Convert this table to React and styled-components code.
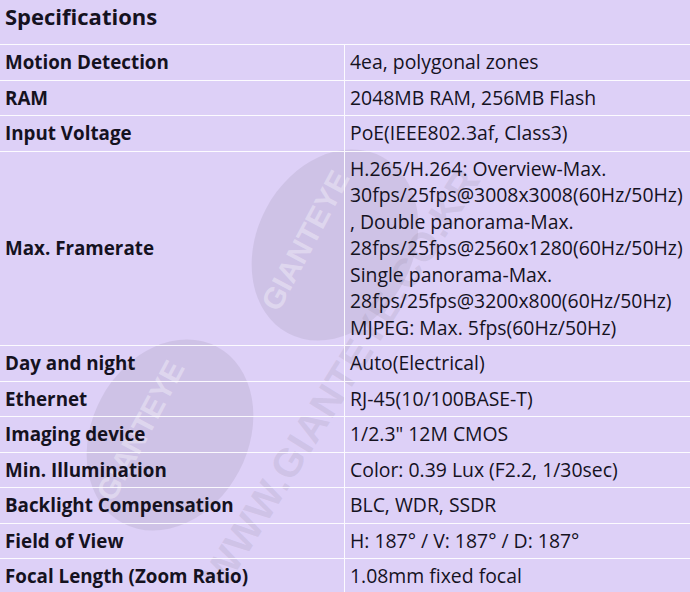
import React from "react";
import styled, { createGlobalStyle } from "styled-components";

const GlobalStyle = createGlobalStyle`
  html, body {
    margin: 0;
    padding: 0;
    background: #ddd0f7;
  }
  body {
    font-family: "Open Sans", "Noto Sans", "Liberation Sans", sans-serif;
    color: #15121f;
  }
`;

const Sheet = styled.div`
  position: relative;
  width: 690px;
  height: 592px;
  overflow: hidden;
  background: #ddd0f7;
`;

const Title = styled.h2`
  position: relative;
  z-index: 1;
  margin: 0;
  height: 44px;
  padding: 0 5px;
  box-sizing: border-box;
  font-size: 22px;
  line-height: 32px;
  font-weight: 700;
`;

const Table = styled.div`
  position: relative;
  z-index: 1;
  display: grid;
  grid-template-columns: 345px 1fr;
`;

const Cell = styled.div`
  display: flex;
  align-items: center;
  padding: 4px 5px;
  border-top: 1.5px solid rgba(255, 255, 255, 0.9);
  border-right: ${(p) => (p.$label ? "1.5px solid rgba(255,255,255,0.9)" : "none")};
  font-size: ${(p) => (p.$label ? "18.8px" : "19.4px")};
  line-height: 26.5px;
  font-weight: ${(p) => (p.$label ? 700 : 400)};
  white-space: pre-line;
`;

const Watermark = styled.svg`
  position: absolute;
  inset: 0;
  z-index: 0;
  pointer-events: none;
`;

const specs = [
  ["Motion Detection", "4ea, polygonal zones"],
  ["RAM", "2048MB RAM, 256MB Flash"],
  ["Input Voltage", "PoE(IEEE802.3af, Class3)"],
  [
    "Max. Framerate",
    "H.265/H.264: Overview-Max.\n30fps/25fps@3008x3008(60Hz/50Hz)\n, Double panorama-Max.\n28fps/25fps@2560x1280(60Hz/50Hz)\nSingle panorama-Max.\n28fps/25fps@3200x800(60Hz/50Hz)\nMJPEG: Max. 5fps(60Hz/50Hz)",
  ],
  ["Day and night", "Auto(Electrical)"],
  ["Ethernet", "RJ-45(10/100BASE-T)"],
  ["Imaging device", '1/2.3" 12M CMOS'],
  ["Min. Illumination", "Color: 0.39 Lux (F2.2, 1/30sec)"],
  ["Backlight Compensation", "BLC, WDR, SSDR"],
  ["Field of View", "H: 187° / V: 187° / D: 187°"],
  ["Focal Length (Zoom Ratio)", "1.08mm fixed focal"],
];

function Stamp({ cx, cy }) {
  return (
    <g transform={`translate(${cx} ${cy}) rotate(-62)`}>
      <ellipse rx="100" ry="78" fill="rgba(150,140,165,0.2)" />
      <text
        x="-10"
        y="-18"
        textAnchor="middle"
        fontFamily="Liberation Sans, sans-serif"
        fontWeight="700"
        fontSize="30"
        fill="rgba(255,255,255,0.35)"
      >
        GIANTEYE
      </text>
    </g>
  );
}

export default function App() {
  return (
    <>
      <GlobalStyle />
      <Sheet>
        <Watermark width="690" height="592" viewBox="0 0 690 592">
          <Stamp cx={335} cy={245} />
          <Stamp cx={170} cy={435} />
          <text
            transform="translate(225 590) rotate(-58)"
            fontFamily="Liberation Sans, sans-serif"
            fontWeight="700"
            fontSize="40"
            letterSpacing="1"
            fill="rgba(150,140,165,0.2)"
          >
            WWW.GIANTEYE.CO.KR
          </text>
        </Watermark>
        <Title>Specifications</Title>
        <Table>
          {specs.map(([label, value]) => (
            <React.Fragment key={label}>
              <Cell $label>{label}</Cell>
              <Cell>{value}</Cell>
            </React.Fragment>
          ))}
        </Table>
      </Sheet>
    </>
  );
}
